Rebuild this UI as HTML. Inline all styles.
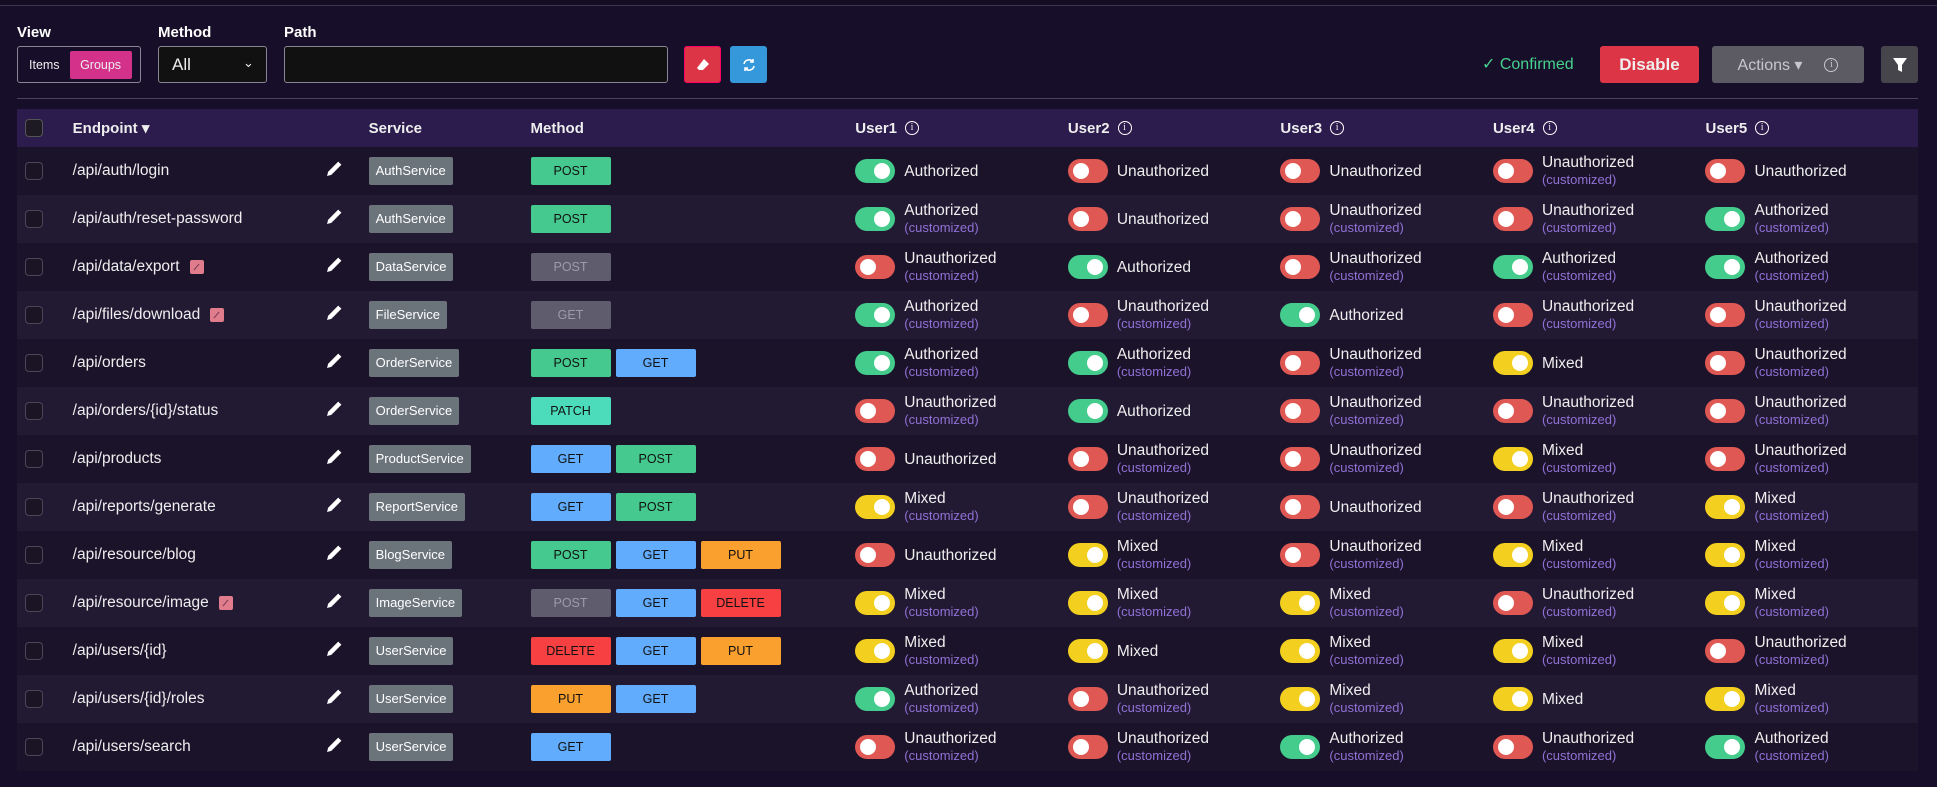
<!DOCTYPE html>
<html><head><meta charset="utf-8"><style>
*{box-sizing:border-box;margin:0;padding:0}
body{width:1937px;height:787px;background:#130d22;font-family:"Liberation Sans",sans-serif;color:#eee;overflow:hidden;position:relative}
.panel{position:absolute;left:0;top:5px;width:1937px;height:782px;background:#170f29;border-top:1px solid #3b3350}
.lbl{position:absolute;top:24px;font-size:15px;font-weight:bold;color:#fff}
.box{position:absolute;top:46px;height:37px;border:1px solid #8a8596;border-radius:3px;background:#111}
.btn{position:absolute;top:46px;height:37px;border-radius:3px;display:flex;align-items:center;justify-content:center}
.hr{position:absolute;left:17px;top:98px;width:1901px;height:1px;background:#4a4360}
.row{position:absolute;left:17px;width:1901px;height:48px;display:flex;align-items:center;font-size:15.5px}
.hd{top:109px;height:38px;background:#2c1b4d;font-weight:bold;font-size:15px}
.r0{background:#1b1329}.r1{background:#221a33}
.c0{width:56px;padding-left:8px}.c1{width:255px;display:flex;align-items:center}.c2{width:43px}.c3{width:163px}.c4{width:327px;display:flex;gap:5px}.cu{width:214px;display:flex;align-items:center}
.cb{width:18px;height:18px;border:1.5px solid #4b4658;border-radius:4px;background:#1a1424}
.hd .cb{background:#1e1a24;border-color:#555}
.svc{display:inline-block;background:#6b737b;color:#fff;font-size:13px;padding:0 7px;height:28px;line-height:28px;border-radius:2px}
.m{width:80px;height:28px;line-height:28px;text-align:center;font-size:12.5px;color:#111;border-radius:2px}
.POST{background:#46c98e}.GET{background:#61acfc}.PUT{background:#faa02f}.DELETE{background:#f64041}.PATCH{background:#4cdcbc}.DIS{background:#5e5c6d;color:#9d9aac}
.tg{width:40px;height:24px;border-radius:12px;position:relative;flex:none;margin-right:9px}
.tg::after{content:"";position:absolute;top:4px;width:16px;height:16px;border-radius:50%;background:#fff}
.A{background:#44cc8c}.A::after{right:5px}.U{background:#e05853}.U::after{left:5px}.M{background:#f3d01f}.M::after{right:5px}
.t{line-height:17px}.cz{font-size:13px;color:#8f72d6;display:block}
.info{display:inline-block;width:14px;height:14px;border:1.3px solid #fff;border-radius:50%;font-size:10px;line-height:12px;text-align:center;margin-left:8px;font-family:"Liberation Serif",serif;font-weight:normal}
.flag{display:inline-block;width:14px;height:14px;background:#e07c8c;border-radius:2px;margin-left:10px;position:relative}
.flag::after{content:"";position:absolute;left:6px;top:3px;width:1px;height:8px;background:#7a3a55;transform:rotate(40deg)}
</style></head><body>
<div class="panel"></div>
<div class="lbl" style="left:17px">View</div>
<div class="lbl" style="left:158px">Method</div>
<div class="lbl" style="left:284px">Path</div>
<div class="box" style="left:17px;width:124px;background:#170f29;font-size:12.5px;display:flex;align-items:center;padding-left:11px"><span>Items</span><span style="margin-left:10px;width:62px;height:28px;background:#d4318a;border-radius:2px;text-align:center;line-height:28px">Groups</span></div>
<div class="box" style="left:158px;width:109px;font-size:17px"><span style="position:absolute;left:13px;top:8px">All</span><span style="position:absolute;left:84px;top:8px;font-size:13px">&#8964;</span></div>
<div class="box" style="left:284px;width:384px"></div>
<div class="btn" style="left:684px;width:37px;background:#dc3545;border:1px solid #f06"><svg width="16" height="16" viewBox="0 0 16 16"><path d="M9 2 L14 7 L8 13 L4 13 L2 11 Z" fill="#fff"/></svg></div>
<div class="btn" style="left:730px;width:37px;background:#3498db"><svg width="16" height="16" viewBox="0 0 16 16" fill="none" stroke="#fff" stroke-width="1.6"><path d="M3 7a5 5 0 0 1 9-2M13 9a5 5 0 0 1-9 2"/><path d="M12 2v3h-3M4 14v-3h3"/></svg></div>
<div style="position:absolute;left:1482px;top:54px;font-size:16px;color:#47d18e">✓ Confirmed</div>
<div class="btn" style="left:1600px;width:99px;background:#dc3545;font-size:17px;font-weight:bold">Disable</div>
<div class="btn" style="left:1712px;width:152px;background:#5c5a62;color:#c8c6cc;font-size:16px">Actions ▾<span class="info" style="border-color:#c8c6cc;margin-left:22px">i</span></div>
<div class="btn" style="left:1881px;width:37px;background:#46454c"><svg width="14" height="16" viewBox="0 0 14 16"><path d="M0 1h14L9 8v7L5 13V8Z" fill="#fff"/></svg></div>
<div class="hr"></div>
<div class="row hd"><div class="c0"><div class="cb"></div></div><div class="c1">Endpoint ▾</div><div class="c2"></div><div class="c3">Service</div><div class="c4">Method</div><div class="cu">User1<span class="info">i</span></div><div class="cu">User2<span class="info">i</span></div><div class="cu">User3<span class="info">i</span></div><div class="cu">User4<span class="info">i</span></div><div class="cu">User5<span class="info">i</span></div></div>
<svg width="0" height="0" style="position:absolute"><defs><symbol id="pen" viewBox="0 0 16 16"><path d="M11.5 1.5l3 3L5 14l-4 1 1-4z" fill="#fff"/></symbol></defs></svg>

<div class="row r0" style="top:147px"><div class="c0"><div class="cb"></div></div><div class="c1">/api/auth/login</div><div class="c2"><svg width="17" height="17"><use href="#pen"/></svg></div><div class="c3"><span class="svc">AuthService</span></div><div class="c4"><div class="m POST">POST</div></div>
<div class="cu"><div class="tg A"></div><div class="t">Authorized</div></div><div class="cu"><div class="tg U"></div><div class="t">Unauthorized</div></div><div class="cu"><div class="tg U"></div><div class="t">Unauthorized</div></div><div class="cu"><div class="tg U"></div><div class="t">Unauthorized<span class="cz">(customized)</span></div></div><div class="cu"><div class="tg U"></div><div class="t">Unauthorized</div></div></div>

<div class="row r1" style="top:195px"><div class="c0"><div class="cb"></div></div><div class="c1">/api/auth/reset-password</div><div class="c2"><svg width="17" height="17"><use href="#pen"/></svg></div><div class="c3"><span class="svc">AuthService</span></div><div class="c4"><div class="m POST">POST</div></div>
<div class="cu"><div class="tg A"></div><div class="t">Authorized<span class="cz">(customized)</span></div></div><div class="cu"><div class="tg U"></div><div class="t">Unauthorized</div></div><div class="cu"><div class="tg U"></div><div class="t">Unauthorized<span class="cz">(customized)</span></div></div><div class="cu"><div class="tg U"></div><div class="t">Unauthorized<span class="cz">(customized)</span></div></div><div class="cu"><div class="tg A"></div><div class="t">Authorized<span class="cz">(customized)</span></div></div></div>

<div class="row r0" style="top:243px"><div class="c0"><div class="cb"></div></div><div class="c1">/api/data/export<span class="flag"></span></div><div class="c2"><svg width="17" height="17"><use href="#pen"/></svg></div><div class="c3"><span class="svc">DataService</span></div><div class="c4"><div class="m DIS">POST</div></div>
<div class="cu"><div class="tg U"></div><div class="t">Unauthorized<span class="cz">(customized)</span></div></div><div class="cu"><div class="tg A"></div><div class="t">Authorized</div></div><div class="cu"><div class="tg U"></div><div class="t">Unauthorized<span class="cz">(customized)</span></div></div><div class="cu"><div class="tg A"></div><div class="t">Authorized<span class="cz">(customized)</span></div></div><div class="cu"><div class="tg A"></div><div class="t">Authorized<span class="cz">(customized)</span></div></div></div>

<div class="row r1" style="top:291px"><div class="c0"><div class="cb"></div></div><div class="c1">/api/files/download<span class="flag"></span></div><div class="c2"><svg width="17" height="17"><use href="#pen"/></svg></div><div class="c3"><span class="svc">FileService</span></div><div class="c4"><div class="m DIS">GET</div></div>
<div class="cu"><div class="tg A"></div><div class="t">Authorized<span class="cz">(customized)</span></div></div><div class="cu"><div class="tg U"></div><div class="t">Unauthorized<span class="cz">(customized)</span></div></div><div class="cu"><div class="tg A"></div><div class="t">Authorized</div></div><div class="cu"><div class="tg U"></div><div class="t">Unauthorized<span class="cz">(customized)</span></div></div><div class="cu"><div class="tg U"></div><div class="t">Unauthorized<span class="cz">(customized)</span></div></div></div>

<div class="row r0" style="top:339px"><div class="c0"><div class="cb"></div></div><div class="c1">/api/orders</div><div class="c2"><svg width="17" height="17"><use href="#pen"/></svg></div><div class="c3"><span class="svc">OrderService</span></div><div class="c4"><div class="m POST">POST</div><div class="m GET">GET</div></div>
<div class="cu"><div class="tg A"></div><div class="t">Authorized<span class="cz">(customized)</span></div></div><div class="cu"><div class="tg A"></div><div class="t">Authorized<span class="cz">(customized)</span></div></div><div class="cu"><div class="tg U"></div><div class="t">Unauthorized<span class="cz">(customized)</span></div></div><div class="cu"><div class="tg M"></div><div class="t">Mixed</div></div><div class="cu"><div class="tg U"></div><div class="t">Unauthorized<span class="cz">(customized)</span></div></div></div>

<div class="row r1" style="top:387px"><div class="c0"><div class="cb"></div></div><div class="c1">/api/orders/{id}/status</div><div class="c2"><svg width="17" height="17"><use href="#pen"/></svg></div><div class="c3"><span class="svc">OrderService</span></div><div class="c4"><div class="m PATCH">PATCH</div></div>
<div class="cu"><div class="tg U"></div><div class="t">Unauthorized<span class="cz">(customized)</span></div></div><div class="cu"><div class="tg A"></div><div class="t">Authorized</div></div><div class="cu"><div class="tg U"></div><div class="t">Unauthorized<span class="cz">(customized)</span></div></div><div class="cu"><div class="tg U"></div><div class="t">Unauthorized<span class="cz">(customized)</span></div></div><div class="cu"><div class="tg U"></div><div class="t">Unauthorized<span class="cz">(customized)</span></div></div></div>

<div class="row r0" style="top:435px"><div class="c0"><div class="cb"></div></div><div class="c1">/api/products</div><div class="c2"><svg width="17" height="17"><use href="#pen"/></svg></div><div class="c3"><span class="svc">ProductService</span></div><div class="c4"><div class="m GET">GET</div><div class="m POST">POST</div></div>
<div class="cu"><div class="tg U"></div><div class="t">Unauthorized</div></div><div class="cu"><div class="tg U"></div><div class="t">Unauthorized<span class="cz">(customized)</span></div></div><div class="cu"><div class="tg U"></div><div class="t">Unauthorized<span class="cz">(customized)</span></div></div><div class="cu"><div class="tg M"></div><div class="t">Mixed<span class="cz">(customized)</span></div></div><div class="cu"><div class="tg U"></div><div class="t">Unauthorized<span class="cz">(customized)</span></div></div></div>

<div class="row r1" style="top:483px"><div class="c0"><div class="cb"></div></div><div class="c1">/api/reports/generate</div><div class="c2"><svg width="17" height="17"><use href="#pen"/></svg></div><div class="c3"><span class="svc">ReportService</span></div><div class="c4"><div class="m GET">GET</div><div class="m POST">POST</div></div>
<div class="cu"><div class="tg M"></div><div class="t">Mixed<span class="cz">(customized)</span></div></div><div class="cu"><div class="tg U"></div><div class="t">Unauthorized<span class="cz">(customized)</span></div></div><div class="cu"><div class="tg U"></div><div class="t">Unauthorized</div></div><div class="cu"><div class="tg U"></div><div class="t">Unauthorized<span class="cz">(customized)</span></div></div><div class="cu"><div class="tg M"></div><div class="t">Mixed<span class="cz">(customized)</span></div></div></div>

<div class="row r0" style="top:531px"><div class="c0"><div class="cb"></div></div><div class="c1">/api/resource/blog</div><div class="c2"><svg width="17" height="17"><use href="#pen"/></svg></div><div class="c3"><span class="svc">BlogService</span></div><div class="c4"><div class="m POST">POST</div><div class="m GET">GET</div><div class="m PUT">PUT</div></div>
<div class="cu"><div class="tg U"></div><div class="t">Unauthorized</div></div><div class="cu"><div class="tg M"></div><div class="t">Mixed<span class="cz">(customized)</span></div></div><div class="cu"><div class="tg U"></div><div class="t">Unauthorized<span class="cz">(customized)</span></div></div><div class="cu"><div class="tg M"></div><div class="t">Mixed<span class="cz">(customized)</span></div></div><div class="cu"><div class="tg M"></div><div class="t">Mixed<span class="cz">(customized)</span></div></div></div>

<div class="row r1" style="top:579px"><div class="c0"><div class="cb"></div></div><div class="c1">/api/resource/image<span class="flag"></span></div><div class="c2"><svg width="17" height="17"><use href="#pen"/></svg></div><div class="c3"><span class="svc">ImageService</span></div><div class="c4"><div class="m DIS">POST</div><div class="m GET">GET</div><div class="m DELETE">DELETE</div></div>
<div class="cu"><div class="tg M"></div><div class="t">Mixed<span class="cz">(customized)</span></div></div><div class="cu"><div class="tg M"></div><div class="t">Mixed<span class="cz">(customized)</span></div></div><div class="cu"><div class="tg M"></div><div class="t">Mixed<span class="cz">(customized)</span></div></div><div class="cu"><div class="tg U"></div><div class="t">Unauthorized<span class="cz">(customized)</span></div></div><div class="cu"><div class="tg M"></div><div class="t">Mixed<span class="cz">(customized)</span></div></div></div>

<div class="row r0" style="top:627px"><div class="c0"><div class="cb"></div></div><div class="c1">/api/users/{id}</div><div class="c2"><svg width="17" height="17"><use href="#pen"/></svg></div><div class="c3"><span class="svc">UserService</span></div><div class="c4"><div class="m DELETE">DELETE</div><div class="m GET">GET</div><div class="m PUT">PUT</div></div>
<div class="cu"><div class="tg M"></div><div class="t">Mixed<span class="cz">(customized)</span></div></div><div class="cu"><div class="tg M"></div><div class="t">Mixed</div></div><div class="cu"><div class="tg M"></div><div class="t">Mixed<span class="cz">(customized)</span></div></div><div class="cu"><div class="tg M"></div><div class="t">Mixed<span class="cz">(customized)</span></div></div><div class="cu"><div class="tg U"></div><div class="t">Unauthorized<span class="cz">(customized)</span></div></div></div>

<div class="row r1" style="top:675px"><div class="c0"><div class="cb"></div></div><div class="c1">/api/users/{id}/roles</div><div class="c2"><svg width="17" height="17"><use href="#pen"/></svg></div><div class="c3"><span class="svc">UserService</span></div><div class="c4"><div class="m PUT">PUT</div><div class="m GET">GET</div></div>
<div class="cu"><div class="tg A"></div><div class="t">Authorized<span class="cz">(customized)</span></div></div><div class="cu"><div class="tg U"></div><div class="t">Unauthorized<span class="cz">(customized)</span></div></div><div class="cu"><div class="tg M"></div><div class="t">Mixed<span class="cz">(customized)</span></div></div><div class="cu"><div class="tg M"></div><div class="t">Mixed</div></div><div class="cu"><div class="tg M"></div><div class="t">Mixed<span class="cz">(customized)</span></div></div></div>

<div class="row r0" style="top:723px"><div class="c0"><div class="cb"></div></div><div class="c1">/api/users/search</div><div class="c2"><svg width="17" height="17"><use href="#pen"/></svg></div><div class="c3"><span class="svc">UserService</span></div><div class="c4"><div class="m GET">GET</div></div>
<div class="cu"><div class="tg U"></div><div class="t">Unauthorized<span class="cz">(customized)</span></div></div><div class="cu"><div class="tg U"></div><div class="t">Unauthorized<span class="cz">(customized)</span></div></div><div class="cu"><div class="tg A"></div><div class="t">Authorized<span class="cz">(customized)</span></div></div><div class="cu"><div class="tg U"></div><div class="t">Unauthorized<span class="cz">(customized)</span></div></div><div class="cu"><div class="tg A"></div><div class="t">Authorized<span class="cz">(customized)</span></div></div></div>
</body></html>
